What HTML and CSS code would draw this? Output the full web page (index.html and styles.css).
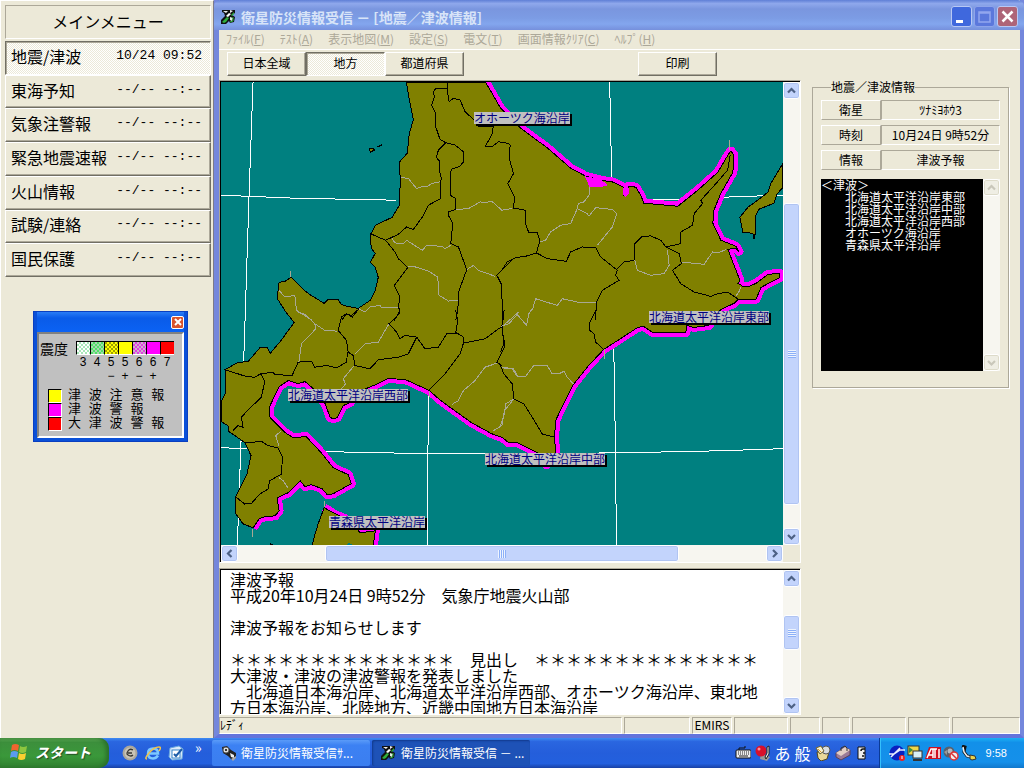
FILE: index.html
```html
<!DOCTYPE html>
<html lang="ja">
<head>
    <meta charset="UTF-8">
    <meta name="viewport" content="width=device-width, initial-scale=1.0">
    <title>衛星防災情報受信</title>
    <link rel="stylesheet" href="styles.css">
</head>
<body>
    <!-- shared icons -->
    <svg class="defs" width="0" height="0">
        <symbol id="arrow-up" viewBox="0 0 9 9"><path d="M1 6.5 4.500 3 8 6.500" fill="none" stroke="currentColor" stroke-width="2.200"/></symbol>
        <symbol id="arrow-down" viewBox="0 0 9 9"><path d="M1 3 4.500 6.500 8 3" fill="none" stroke="currentColor" stroke-width="2.200"/></symbol>
        <symbol id="arrow-left" viewBox="0 0 9 9"><path d="M6.500 1 3 4.500 6.500 8" fill="none" stroke="currentColor" stroke-width="2.200"/></symbol>
        <symbol id="arrow-right" viewBox="0 0 9 9"><path d="M3 1 6.500 4.500 3 8" fill="none" stroke="currentColor" stroke-width="2.200"/></symbol>
        <symbol id="app-icon" viewBox="0 0 16 16">
            <path d="M1 1h13v3l-3 2 3 2-1 5-4 1-1-2-3 3H0v-4l4-4-1-3-2-1z" fill="#111"/>
            <path d="M2 2h5l-2 2zM9 1l3 1-3 2z" fill="#eee"/>
            <path d="M1 13l5-5 2 1-3 4-2 1z" fill="#2fae3c"/>
            <path d="M5 7l3-3 2 1-3 3z" fill="#fff"/>
            <path d="M10 6l3-3v2l-2 2z" fill="#2fae3c"/>
            <path d="M9 8l3 1-1 3-2-1z" fill="#dff0e0"/>
            <path d="M12 8v4l-3 1" fill="none" stroke="#2fae3c"/>
        </symbol>
    </svg>

    <div class="desktop">
        <div class="sidebar">
            <h1 class="menu-title">メインメニュー</h1>
            <nav class="main-menu">
                <button class="menu-item active"><span>地震/津波</span><span class="stamp">10/24 09:52</span></button>
                <button class="menu-item"><span>東海予知</span><span class="stamp">--/-- --:--</span></button>
                <button class="menu-item"><span>気象注警報</span><span class="stamp">--/-- --:--</span></button>
                <button class="menu-item"><span>緊急地震速報</span><span class="stamp">--/-- --:--</span></button>
                <button class="menu-item"><span>火山情報</span><span class="stamp">--/-- --:--</span></button>
                <button class="menu-item"><span>試験/連絡</span><span class="stamp">--/-- --:--</span></button>
                <button class="menu-item"><span>国民保護</span><span class="stamp">--/-- --:--</span></button>
            </nav>

            <div class="legend-window">
                <div class="legend-bar">
                    <button class="legend-close" aria-label="閉じる">
                        <svg width="8" height="8" viewBox="0 0 8 8"><path d="M1 1l6 6M7 1l-6 6" stroke="#fff" stroke-width="2"/></svg>
                    </button>
                </div>
                <div class="legend-body">
                    <div class="scale">
                        <span class="scale-name">震度</span>
                        <ul class="scale-list">
                            <li><i class="swatch s3"></i>3</li>
                            <li><i class="swatch s4"></i>4</li>
                            <li><i class="swatch s5l"></i>5<b>−</b></li>
                            <li><i class="swatch s5u"></i>5<b>+</b></li>
                            <li><i class="swatch s6l"></i>6<b>−</b></li>
                            <li><i class="swatch s6u"></i>6<b>+</b></li>
                            <li><i class="swatch s7"></i>7</li>
                        </ul>
                    </div>
                    <ul class="warnings">
                        <li><i class="swatch s5u"></i>津 波 注 意 報</li>
                        <li><i class="swatch s6u"></i>津 波 警 報</li>
                        <li><i class="swatch s7"></i>大 津 波 警 報</li>
                    </ul>
                </div>
            </div>
        </div>

        <div class="window">
            <div class="titlebar">
                <svg class="icon"><use href="#app-icon"/></svg>
                <h2>衛星防災情報受信 － [地震／津波情報]</h2>
                <button class="win-btn min" aria-label="最小化"><svg width="19" height="19" viewBox="0 0 19 19"><path d="M4 13h7v3H4z" fill="#fff"/></svg></button>
                <button class="win-btn max" aria-label="最大化" disabled><svg width="19" height="19" viewBox="0 0 19 19"><path d="M4 5h11v10H4zM4 6h11" fill="none" stroke="#93a6ee" stroke-width="1.500"/></svg></button>
                <button class="win-btn close" aria-label="閉じる"><svg width="19" height="19" viewBox="0 0 19 19"><path d="M4.500 4.500l10 10M14.500 4.500l-10 10" stroke="#fff" stroke-width="2.500"/></svg></button>
            </div>
            <nav class="menubar">
                <a href="#">ﾌｧｲﾙ(<u>F</u>)</a>
                <a href="#">ﾃｽﾄ(<u>A</u>)</a>
                <a href="#">表示地図(<u>M</u>)</a>
                <a href="#">設定(<u>S</u>)</a>
                <a href="#">電文(<u>T</u>)</a>
                <a href="#">画面情報ｸﾘｱ(<u>C</u>)</a>
                <a href="#">ﾍﾙﾌﾟ(<u>H</u>)</a>
            </nav>
            <div class="toolbar">
                <button class="tool">日本全域</button>
                <button class="tool active">地方</button>
                <button class="tool">都道府県</button>
                <button class="tool print">印刷</button>
            </div>

            <div class="workspace">
                <div class="views">
                    <div class="frame map-frame">
                        <div class="map">
                            <svg class="map-art" viewBox="221 82 561 463" preserveAspectRatio="xMinYMin slice" shape-rendering="crispEdges">
                                <g class="grid">
                                    <path d="M253 82 249 195 245 320 241 440 238 525 237 545"/>
                                    <path d="M221 195 246 196 295 198 396 200"/>
                                    <path d="M645 199 683 199 684 198 723 197 750 196 782 195"/>
                                    <path d="M221 447 243 448 326 451 427 453 568 453 614 452 685 451 755 449 782 448"/>
                                    <path d="M428 389 427 545"/>
                                    <path d="M609 82 611 178M613 348 614 390 615 484 616 545"/>
                                </g>

                                <!-- tsunami warning coast, the land covers its inner half -->
                                <path class="warn" d="M253 527 259 518 265 516 275 515 279 510 277 497 288 492 300 480 305 486 311 484 322 488 327 494 333 493 351 483 348 474 333 467 321 452 306 436 293 437 285 432 270 417 269 407 279 386 288 380 298 383 305 381 313 388 325 403 330 417 333 418 337 417 343 405 350 402 358 392 366 388 378 383 388 378 405 379 429 390 438 398 450 407 471 422 491 433 502 437 508 442 517 442 537 452 546 464 555 452 554 437 555 420 562 405 572 385 588 365 603 349 617 340 637 327 643 326 652 332 685 332 686 325 693 327 708 325 720 309 733 303 737 299 755 299 760 287 779 277 779 273 767 274 755 283 748 286 742 286 737 283 739 280 730 257 727 249 735 248 738 251 735 246 720 240 712 223 713 210 720 193 732 172 733 155 730 151 727 155 717 172 697 190 677 206 643 203 640 195 635 187 628 186 626 195 623 195 623 187 613 182 600 180 585 176 570 168 547 148 520 128 500 108 485 82"/>
                                <path class="warn" d="M324 507 335 514 345 518 358 529 368 530 375 530 373 545"/>

                                <path class="land" d="M406 82 409 100 413 120 409 133 407 153 399 162 400 180 399 205 392 217 375 225 370 235 371 248 375 253 370 262 375 267 378 277 375 290 370 300 358 308 347 306 341 304 338 299 328 299 324 303 311 295 303 289 291 277 285 281 279 282 277 298 286 312 294 322 281 340 270 353 267 347 260 347 248 361 238 362 225 369 226 392 221 401 221 421 228 425 229 431 245 442 251 455 247 473 235 497 235 512 243 523 253 527 259 518 265 516 275 515 279 510 277 497 288 492 300 480 305 486 311 484 322 488 327 494 333 493 351 483 348 474 333 467 321 452 306 436 293 437 285 432 270 417 269 407 279 386 288 380 298 383 305 381 313 388 325 403 330 417 333 418 337 417 343 405 350 402 358 392 366 388 378 383 388 378 405 379 429 390 438 398 450 407 471 422 491 433 502 437 508 442 517 442 537 452 546 464 555 452 554 437 555 420 562 405 572 385 588 365 603 349 617 340 637 327 643 326 652 332 685 332 686 325 693 327 708 325 720 309 733 303 737 299 755 299 760 287 779 277 779 273 767 274 755 283 748 286 742 286 737 283 739 280 730 257 727 249 735 248 738 251 735 246 720 240 712 223 713 210 720 193 732 172 733 155 730 151 727 155 717 172 697 190 677 206 643 203 640 195 635 187 628 186 626 195 623 195 623 187 613 182 600 180 585 176 570 168 547 148 520 128 500 108 485 82z"/>
                                <path class="land" d="M782 163 770 183 767 192 758 199 747 207 739 217 742 232 752 233 753 239 755 230 755 215 758 209 773 203 776 194 782 187z"/>
                                <path class="land" d="M324 507 318 523 315 533 312 545 373 545 375 530 360 532 350 520 335 513z"/>
                                <path class="land" d="M369 148l4 0 1 2-4 2zM270 545v-2l4 2z"/>
                                <path d="M377 146l5-2v2l-5 1z"/>
                                <path class="sea" d="M346 545l2-3 3 1 2 2z"/>
                                <!-- lagoons -->
                                <path class="lagoon" d="M584 176 600 179 607 185 600 187 589 187zM622 188l6 0 0 6-3 3-3-3z"/>

                                <!-- city borders, four map sheets digitised at 3x -->
                                <g class="border" transform="translate(218 80) scale(.33333)">
                                    <path d="M688 5 686 25 652 25 645 35 648 50 640 75 652 100 652 140 665 178 682 188 660 210 654 232 665 245 662 270 668 290 667 355 630 375 612 410 585 448 565 440 540 462 502 480 456 460"/>
                                    <path d="M686 25 692 65 705 55 725 60 740 95 765 118 780 138 824 140 822 160 800 200 820 200 840 185 870 190 875 195 872 235 885 280 868 310 888 350 885 385 900 385"/>
                                    <path d="M682 188 710 195 735 215 735 245 725 258 698 268 695 345 712 355 712 388 690 395 690 405 703 430 697 490 720 500 745 568 722 630 718 690 712 720"/>
                                    <path d="M502 480 530 515 540 535 568 562 528 615 545 650 540 680 545 690 528 720"/>
                                    <path d="M422 685 402 710 385 700 370 720M900 530 885 535 865 555 835 585 848 610 852 680 855 720"/>
                                </g>
                                <g class="border" transform="translate(500 80) scale(.33333)">
                                    <path d="M38 383 75 390 75 430 85 458 110 458 118 480 108 518 75 528 45 532 20 545 0 575"/>
                                    <path d="M108 518 140 535 197 543 210 515 245 500 285 502 300 530 350 570 345 585 355 600 305 630 287 665 285 720"/>
                                    <path d="M345 570 370 545 402 540 402 490 425 468 450 467 480 480 495 500 540 490 540 455 575 435 580 400 605 370 600 360 650 305 680 270 688 225"/>
                                    <path d="M495 500 535 520 542 550 515 570 540 610 580 635 630 648 650 640 680 635 710 655"/>
                                </g>
                                <g class="border" transform="translate(218 310) scale(.33333)">
                                    <path d="M712 0 718 30 712 65 735 80 735 100M545 0 545 8 512 40 535 65 545 85 560 75 595 80 620 115 660 110 685 70 715 68 M735 98 800 85 850 48"/>
                                    <path d="M595 80 570 130 540 140 480 148 455 175 410 165 405 135 390 125 385 90 360 60 370 20 385 10 400 15 415 0"/>
                                    <path d="M388 125 385 155 355 172 325 165 290 170 280 152 240 155 222 195 170 192 165 185 128 190 110 200 85 198 22 178"/>
                                    <path d="M128 190 140 212 130 260 88 300 70 320 75 350 60 345 45 360"/>
                                    <path d="M82 397 130 392 150 405 180 412 193 440 190 490 155 510 150 535 125 550 100 578 80 580 55 560"/>
                                    <path d="M735 98 725 130 680 190 632 238M857 0 850 48 858 110 835 155 850 165"/>
                                </g>
                                <g class="border" transform="translate(500 310) scale(.33333)">
                                    <path d="M5 0 5 60 12 95 0 125M0 165 10 190 35 220 40 265 70 280 95 320 125 370 163 380"/>
                                    <path d="M285 0 265 40 268 60 280 70 285 95 310 118"/>
                                </g>

                                <g class="border minor" transform="translate(218 80) scale(.33333)">
                                    <path d="M548 292 570 295 595 325 610 320 625 320 640 310 665 305M712 388 750 385 785 365 800 367 820 363 850 390 880 385"/>
                                    <path d="M520 472 530 488 555 490 565 480 612 510 625 495 670 498 680 505 697 495"/>
                                    <path d="M568 560 585 558 630 572 658 590 662 645 690 662 718 660M745 568 765 555 780 570 830 588"/>
                                    <path d="M183 630 200 650 230 645 235 690 280 718M422 685 440 695 455 680 485 675 490 682 540 680M218 572v18"/>
                                </g>
                                <g class="border minor" transform="translate(500 80) scale(.33333)">
                                    <path d="M118 485 135 480 150 455 180 435 210 430 230 385 233 370 250 365 265 345 268 320"/>
                                    <path d="M230 385 260 400 265 408 285 382 335 388 348 400 335 440 290 495M402 540 410 570 450 585 490 580 505 555 500 510"/>
                                    <path d="M542 545 610 552 635 515 650 518 675 508M95 690 105 655 170 675 185 655 230 665 287 665M720 620 715 632 705 648M686 180v30"/>
                                </g>
                                <g class="border minor" transform="translate(218 310) scale(.33333)">
                                    <path d="M240 5 260 12 290 40 292 55 275 75 250 100 242 155M290 40 320 60 355 62M512 40 480 95 440 100 410 130M408 165 375 205 382 220 370 235"/>
                                    <path d="M835 158 800 170 770 210 735 240 720 270 700 282M850 170 885 175 900 200M886 265 858 300 850 345 825 360M855 45 900 5"/>
                                    <path d="M188 362 173 375 182 405M182 500 195 510 210 532M320 570v20M104 655v25M632 240v20"/>
                                </g>
                                <g class="border minor" transform="translate(500 310) scale(.33333)">
                                    <path d="M0 48 25 40 50 12 78 45 85 10 95 -5M5 172 35 175 50 198 75 198 100 165 140 165 155 190 175 190 190 182 200 200 218 220"/>
                                    <path d="M40 265 15 280 12 310 0 345M310 115v32"/>
                                </g>
                            </svg>
                            <span class="place okhotsk">オホーツク海沿岸</span>
                            <span class="place east">北海道太平洋沿岸東部</span>
                            <span class="place west">北海道太平洋沿岸西部</span>
                            <span class="place central">北海道太平洋沿岸中部</span>
                            <span class="place aomori">青森県太平洋沿岸</span>
                        </div>
                        <div class="scroll vert map-v">
                            <button aria-label="上へ"><svg><use href="#arrow-up"/></svg></button>
                            <div class="track"><i class="thumb"></i></div>
                            <button aria-label="下へ"><svg><use href="#arrow-down"/></svg></button>
                        </div>
                        <div class="scroll horiz map-h">
                            <button aria-label="左へ"><svg><use href="#arrow-left"/></svg></button>
                            <div class="track"><i class="thumb"></i></div>
                            <button aria-label="右へ"><svg><use href="#arrow-right"/></svg></button>
                        </div>
                        <div class="corner"></div>
                    </div>

                    <div class="frame report-frame">
                        <textarea class="report" aria-label="電文" readonly>津波予報
平成20年10月24日 9時52分　気象庁地震火山部

津波予報をお知らせします

＊＊＊＊＊＊＊＊＊＊＊＊＊＊　見出し　＊＊＊＊＊＊＊＊＊＊＊＊＊＊
大津波・津波の津波警報を発表しました
　北海道日本海沿岸、北海道太平洋沿岸西部、オホーツク海沿岸、東北地
方日本海沿岸、北陸地方、近畿中国地方日本海沿岸</textarea>
                        <div class="scroll vert report-v">
                            <button aria-label="上へ"><svg><use href="#arrow-up"/></svg></button>
                            <div class="track"><i class="thumb"></i></div>
                            <button aria-label="下へ"><svg><use href="#arrow-down"/></svg></button>
                        </div>
                    </div>
                </div>

                <div class="info">
                    <fieldset>
                        <legend>地震／津波情報</legend>
                        <dl class="facts">
                            <dt>衛星</dt><dd>ﾂﾅﾐﾖﾎｳ3</dd>
                            <dt>時刻</dt><dd>10月24日 9時52分</dd>
                            <dt>情報</dt><dd>津波予報</dd>
                        </dl>
                        <div class="areas">
                            <textarea aria-label="対象沿岸" readonly>＜津波＞
　　北海道太平洋沿岸東部
　　北海道太平洋沿岸中部
　　北海道太平洋沿岸西部
　　オホーツク海沿岸
　　青森県太平洋沿岸</textarea>
                            <div class="scroll vert off">
                                <button aria-label="上へ" disabled><svg><use href="#arrow-up"/></svg></button>
                                <div class="track"></div>
                                <button aria-label="下へ" disabled><svg><use href="#arrow-down"/></svg></button>
                            </div>
                        </div>
                    </fieldset>
                </div>
            </div>

            <div class="statusbar">
                <span class="ready">ﾚﾃﾞｨ</span>
                <span></span>
                <span class="system">EMIRS</span>
                <span></span>
                <span></span>
                <span></span>
                <span></span>
                <span></span>
                <span></span>
            </div>
        </div>
    </div>

    <div class="taskbar">
        <button class="start">
            <svg width="20" height="20" viewBox="0 0 20 20">
                <path d="M3 3q3-2 7 0L9 9q-4-2-7 0z" fill="#f0652f"/>
                <path d="M11 4q3 2 7 0l-1 6q-4 2-7 0z" fill="#8dc63f"/>
                <path d="M2 10q3-2 7 0l-1 6q-4-2-7 0z" fill="#5b9bf0"/>
                <path d="M10 11q3 2 7 0l-1 6q-4 2-7 0z" fill="#fbd030"/>
            </svg>
            スタート
        </button>
        <div class="quick">
            <svg class="icon" viewBox="0 0 16 16"><circle cx="8" cy="8" r="7.500" fill="#aaa69c"/><circle cx="8" cy="8" r="5.500" fill="#c9c4b6"/><path d="M11 5q-3-2-5 1t0 4q3 2 5 0M6 8h4" fill="none" stroke="#393733" stroke-width="1.300"/></svg>
            <svg class="icon" viewBox="0 0 16 16"><path d="M3 8.500h10q0-5-5-5t-5 5 5 5q3 0 5-3" fill="none" stroke="#7cc8ff" stroke-width="2.500"/><path d="M2 14Q-1 14 4 8T14 2q3 0 0 4" fill="none" stroke="#f2c34a" stroke-width="1.500"/></svg>
            <svg class="icon" viewBox="0 0 16 16"><path d="M2 3l9-2 4 3-1 10-10 1-3-3z" fill="#dcebfa" stroke="#69a8df"/><rect x="4" y="5" width="8" height="8" fill="#fff" stroke="#3583c8"/><path d="M6 9l2 2 6-7" fill="none" stroke="#1d5da8" stroke-width="2"/></svg>
            <span class="more">»</span>
        </div>
        <button class="task">
            <svg class="icon" viewBox="0 0 16 16"><path d="M1 2l5-1 4 4 5 3v5l-4 2-4-4-5-3z" fill="#222"/><circle cx="5" cy="5" r="3" fill="#ddd" stroke="#555"/><circle cx="5" cy="5" r="1"/><path d="M9 8l4 2v3l-3-1z" fill="#eee"/><path d="M10 14l5-3v2l-3 3z" fill="#aaa"/></svg>
            衛星防災情報受信ｻ...
        </button>
        <button class="task current">
            <svg class="icon"><use href="#app-icon"/></svg>
            衛星防災情報受信 － ...
        </button>
        <div class="langbar">
            <svg class="icon" viewBox="0 0 16 16"><path d="M4 5V3h6V1" fill="none" stroke="#111"/><rect x="1" y="5" width="15" height="8" rx="1" fill="#eee" stroke="#111"/><path d="M3 7h11M3 9h11" stroke="#222" stroke-dasharray="1 1"/><path d="M4 11h9" stroke="#222"/></svg>
            <svg class="icon" viewBox="0 0 16 16"><path d="M6 8l9 4-3 4-7-2z" fill="#999"/><circle cx="6" cy="6" r="5.500" fill="#d8102b"/><circle cx="4" cy="4" r="1.500" fill="#ff8d98"/><path d="M14 1v8l-3 5-1-2 2-4V2z" fill="#e8e8e8" stroke="#222"/></svg>
            <span>あ</span>
            <span>般</span>
            <svg class="icon" viewBox="0 0 16 16"><path d="M2 7h12l-2 7-6 2-3-3z" fill="#e9d99a" stroke="#53481f"/><circle cx="11" cy="5" r="4" fill="#d7dde2" stroke="#555"/><path d="M1 3l5-2 3 5-4 3z" fill="#f7f0cf" stroke="#6e6331"/><path d="M3 4l3 3" stroke="#d92"/></svg>
            <svg class="icon" viewBox="0 0 16 16"><path d="M1 8l9-6 5 3v5l-9 5-5-3z" fill="#9b7b97" stroke="#5b4358"/><path d="M1 8l9-6 5 3-9 6z" fill="#e3cfc5"/><path d="M6 6V3l4-2 2 2v3" fill="none" stroke="#333"/></svg>
            <svg class="icon" viewBox="0 0 16 16"><path d="M3 2h7v12H3z" fill="#eee" stroke="#111"/><path d="M6 6q0-2 2-2h2M8 8h2M7 11h2" fill="none" stroke="#111" stroke-width="1.500"/></svg>
        </div>
        <div class="tray">
            <svg class="icon" viewBox="0 0 16 16"><circle cx="8" cy="8" r="7.500" fill="#0b1fc0"/><path d="M0 9h5l6-4h5M2 12l9-9" stroke="#e8ecff" fill="none" stroke-width="1.500"/><circle cx="13" cy="13" r="3" fill="#e22"/><path d="M13 11v3" stroke="#fff"/></svg>
            <svg class="icon" viewBox="0 0 16 16"><rect x="1" y="1" width="11" height="9" fill="#f1d648" stroke="#333"/><path d="M2 2l4 3-4 3z" fill="#3b8f3e"/><rect x="6" y="6" width="9" height="7" fill="#d9f0f6" stroke="#333"/><path d="M6 15h9" stroke="#333" stroke-width="2"/></svg>
            <svg class="icon ati" viewBox="0 0 16 16"><path d="M4 2h12v12H0z" fill="#cf1020"/><path d="M2 13L6 4h2v9M4 10h4M8 4h4M10 4v9M14 4v9" fill="none" stroke="#fff" stroke-width="1.500"/></svg>
            <svg class="icon" viewBox="0 0 16 16"><circle cx="6" cy="7" r="5.500" fill="#59606b"/><circle cx="7" cy="6" r="2.500" fill="#b2b8c0"/><path d="M1 7l3-2v5z" fill="#999"/><circle cx="11" cy="11" r="4" fill="#eee" stroke="#d33" stroke-width="1.500"/><path d="M8 8l6 6" stroke="#d33" stroke-width="1.500"/></svg>
            <svg class="icon" viewBox="0 0 16 16"><path d="M1 1l3 1-1 5 3 4 5 1" fill="none" stroke="#111" stroke-width="3"/><path d="M2 2l1 5 3 4 4 1" fill="none" stroke="#eee" stroke-width="1.500"/><path d="M9 10l5 1 1 3-4 1-2-1z" fill="#e9d34b" stroke="#333"/></svg>
            <span class="clock">9:58</span>
        </div>
    </div>
</body>
</html>
```

FILE: styles.css
```css
* {
    box-sizing: border-box;
}

body {
    margin: 0;
    height: 100vh;
    display: flex;
    flex-direction: column;
    overflow: hidden;
    background: #ece9d8;
    color: #000;
    font: 12px/14px "Noto Sans CJK JP", sans-serif;
}

button, textarea {
    font: inherit;
    color: inherit;
    border-radius: 0;
    padding: 0;
    margin: 0;
}

h1, h2, ul, dl, dd {
    margin: 0;
    padding: 0;
    font-weight: normal;
    list-style: none;
}

svg {
    display: block;
    flex: none;
}

.defs {
    position: absolute;
}

.icon {
    width: 16px;
    height: 16px;
}

.desktop {
    flex: 1;
    min-height: 0;
    display: flex;
}

/* left side menu */
.sidebar {
    flex: none;
    width: 214px;
    padding: 4px 2px 0 4px;
    border-left: 1px solid #fff;
    border-right: 1px solid #7c7a88;
    border-top: 1px solid #fff;
}

.menu-title {
    height: 34px;
    margin-bottom: 2px;
    font-size: 16px;
    line-height: 30px;
    text-align: center;
    border: 1px solid;
    border-color: #aca899 #fff #fff #aca899;
}

.main-menu {
    display: flex;
    flex-direction: column;
    height: 236px;
}

.menu-item {
    flex: 1;
    display: flex;
    justify-content: space-between;
    align-items: center;
    padding: 0 8px 4px 5px;
    font-size: 16px;
    line-height: 20px;
    background: #ece9d8;
    border: 1px solid;
    border-color: #fff #716f64 #716f64 #fff;
    box-shadow: inset -1px -1px #aca899;
}

.menu-item.active, .tool.active {
    background: repeating-conic-gradient(#fff 0 25%, #ece9d8 0 50%) 0 0 / 2px 2px;
    border-color: #716f64 #fff #fff #716f64;
    box-shadow: inset 1px 1px #aca899;
}

.stamp {
    font-family: "Liberation Mono", monospace;
    font-size: 13px;
}

/* colour legend */
.legend-window {
    width: 155px;
    margin: 34px 0 0 28px;
    padding: 0 3px 3px;
    background: #0a50d8;
    border: 1px solid #0a3fc0;
}

.legend-bar {
    display: flex;
    justify-content: flex-end;
    align-items: center;
    height: 20px;
    background: linear-gradient(#2a7cf5, #0a5be8 30%, #0b62f4);
}

.legend-close {
    width: 13px;
    height: 13px;
    display: flex;
    align-items: center;
    justify-content: center;
    background: #d9532c;
    border: 1px solid #fff;
    border-radius: 2px;
}

.legend-body {
    height: 106px;
    padding: 7px 0 0 1px;
    background: #c0c0c0;
    border: 2px solid;
    border-color: #808080 #fff #fff #808080;
}

.scale {
    display: flex;
    height: 48px;
}

.scale-name {
    width: 36px;
    font-size: 14px;
    line-height: 14px;
}

.scale-list {
    display: flex;
    font-family: "Liberation Sans", sans-serif;
}

.scale-list li {
    width: 14px;
    text-align: center;
    line-height: 14px;
}

.scale-list b {
    display: block;
    font-weight: normal;
    line-height: 14px;
}

.swatch {
    display: block;
    width: 14px;
    height: 14px;
    border: 1px solid;
    border-color: #000 #fff #fff #000;
}

.scale-list .swatch {
    border-right: 0;
}

.s3 { background: repeating-conic-gradient(#a8e8b8 0 25%, #fff 0 50%) 0 0 / 4px 4px; }
.s4 { background: repeating-conic-gradient(#50e068 0 25%, #a8d8b0 0 50%) 0 0 / 4px 4px; }
.s5l { background: repeating-conic-gradient(#ff0 0 25%, #a0a000 0 50%) 0 0 / 4px 4px; }
.s5u { background: #ff0; }
.s6l { background: repeating-conic-gradient(#e040e0 0 25%, #d0b0d0 0 50%) 0 0 / 4px 4px; }
.s6u { background: #f0f; }
.s7 { background: #f00; }

.warnings {
    padding-left: 8px;
    font: 13px/14px "Liberation Mono", "Noto Sans CJK JP", monospace;
}

.warnings li {
    display: flex;
    gap: 6px;
    height: 14px;
}

/* main window */
.window {
    flex: 1;
    min-width: 0;
    display: flex;
    flex-direction: column;
    background: #ece9d8;
    border: solid #7487dc;
    border-width: 0 4px 4px 5px;
    border-bottom-color: #6474dc;
}

.titlebar {
    display: flex;
    align-items: center;
    gap: 2px;
    height: 30px;
    margin: 0 -4px 0 -5px;
    padding: 3px 6px 0 7px;
    background: linear-gradient(#5f7fd6, #8fa8ec 12%, #7a96df 30%, #7c9ce4 60%, #83a6ee 80%, #7690dc);
    border-radius: 6px 6px 0 0;
}

.titlebar h2 {
    flex: 1;
    padding-left: 2px;
    font-size: 14px;
    line-height: 20px;
    font-weight: bold;
    color: #d8e4f8;
    white-space: nowrap;
}

.win-btn {
    width: 21px;
    height: 21px;
    border: 1px solid #b8c8f4;
    border-radius: 3px;
    background: #3f68dd;
}

.win-btn.max {
    background: #5b78dc;
    border-color: #8ea4ea;
}

.win-btn.close {
    background: #ae6478;
}

.menubar {
    display: flex;
    height: 20px;
    border-bottom: 1px solid #fff;
    line-height: 18px;
}

.menubar a {
    padding: 0 8px 0 7px;
    color: #aca899;
    text-decoration: none;
}

.toolbar {
    display: flex;
    height: 30px;
    padding: 2px 0 0 8px;
}

.tool {
    width: 79px;
    height: 24px;
    padding-bottom: 2px;
    background: #ece9d8;
    border: 1px solid;
    border-color: #fff #716f64 #716f64 #fff;
    box-shadow: inset -1px -1px #aca899;
}

.tool.print {
    margin-left: 174px;
}

.workspace {
    flex: 1;
    min-height: 0;
    display: flex;
}

.views {
    flex: 1;
    min-width: 0;
    display: flex;
    flex-direction: column;
    gap: 5px;
}

.frame {
    display: grid;
    grid-template-columns: 1fr 17px;
    padding: 1px 0 0 1px;
    background: #000;
    border: 1px solid;
    border-color: #aca899 #fff #fff #aca899;
}

.map-frame {
    flex: 1;
    min-height: 0;
    grid-template-rows: 1fr 17px;
}

.map {
    position: relative;
    overflow: hidden;
    min-height: 0;
    background: #008080;
}

.map-art {
    width: 100%;
    height: 100%;
}

.grid path {
    fill: none;
    stroke: #fff;
}

.warn {
    fill: none;
    stroke: #f0f;
    stroke-width: 9;
    stroke-linejoin: round;
}

.land {
    fill: #808000;
    stroke: #000;
}

.sea {
    fill: #008080;
}

.lagoon {
    fill: #f0f;
}

.border {
    fill: none;
    stroke: #000;
    stroke-width: 3;
}

.border.minor {
    stroke: #a8a894;
}

.place {
    position: absolute;
    height: 12px;
    line-height: 12px;
    color: #000080;
    background: #c0c0c0;
    box-shadow: 2px 2px #000;
    white-space: nowrap;
}

.okhotsk { left: 253px; top: 30px; }
.east { left: 428px; top: 229px; }
.west { left: 67px; top: 307px; }
.central { left: 264px; top: 371px; }
.aomori { left: 108px; top: 434px; }

/* scroll bars */
.scroll {
    display: flex;
    background: #f7f6f0;
}

.scroll.vert {
    flex-direction: column;
}

.scroll button, .thumb {
    background: #c3d4fc;
    border: 1px solid #fff;
    border-radius: 3px;
    box-shadow: inset 0 0 0 1px #b0c4f2;
    color: #4d6185;
}

.scroll button {
    flex: none;
    width: 17px;
    height: 17px;
    display: flex;
    align-items: center;
    justify-content: center;
}

.scroll button svg {
    width: 9px;
    height: 9px;
}

.track {
    flex: 1;
    display: grid;
}

.thumb {
    display: flex;
    align-items: center;
    justify-content: center;
}

.thumb::after {
    content: "";
    width: 8px;
    height: 8px;
    background: repeating-linear-gradient(#eef4fe 0 1px, #8cb0f8 1px 2px);
}

.horiz .thumb::after {
    background: repeating-linear-gradient(90deg, #eef4fe 0 1px, #8cb0f8 1px 2px);
}

.map-v .track { grid-template-rows: 104fr 302fr 23fr; }
.map-h .track { grid-template-columns: 87fr 353fr 87fr; }
.report-v .track { grid-template-rows: 28fr 35fr 47fr; }

.vert .thumb { grid-row: 2; }
.horiz .thumb { grid-column: 2; }

.scroll.off button {
    background: #efeee4;
    border-color: #fff;
    box-shadow: inset 0 0 0 1px #dddbca;
    color: #c9c7ba;
}

.corner {
    background: #ece9d8;
}

.report-frame {
    height: 147px;
}

.report {
    display: block;
    width: 100%;
    height: 100%;
    padding: 1px 0 0 9px;
    border: 0;
    outline: 0;
    resize: none;
    overflow: hidden;
    background: #fff;
    font-size: 16px;
    line-height: 16px;
    white-space: pre;
}

/* right side information */
.info {
    flex: none;
    width: 219px;
    padding: 0 11px;
}

fieldset {
    margin: 0;
    min-width: 0;
    padding: 6px 8px 16px;
    border: 1px solid #aca899;
    box-shadow: 1px 1px #fff;
}

legend {
    margin-left: 10px;
    padding: 0;
}

.facts {
    display: grid;
    grid-template-columns: 60px 1fr;
    gap: 5px 0;
    text-align: center;
    line-height: 18px;
}

.facts dt {
    border: 1px solid;
    border-color: #fff #aca899 #aca899 #fff;
}

.facts dd {
    border: 1px solid;
    border-color: #aca899 #fff #fff #aca899;
}

.areas {
    display: flex;
    height: 192px;
    margin-top: 9px;
}

.areas textarea {
    flex: 1;
    min-width: 0;
    border: 0;
    outline: 0;
    resize: none;
    overflow: hidden;
    background: #000;
    color: #fff;
    line-height: 12px;
    white-space: pre;
}

.statusbar {
    display: grid;
    grid-template-columns: 1fr 66px 40px 54px 30px 28px 54px 42px 68px;
    gap: 2px;
    height: 19px;
    padding-top: 2px;
    line-height: 14px;
}

.statusbar span {
    border: 1px solid;
    border-color: #aca899 #fff #fff #aca899;
}

.statusbar .system {
    text-align: center;
}

/* taskbar */
.taskbar {
    flex: none;
    display: flex;
    height: 30px;
    background: linear-gradient(#3f8cf3, #2a66e0 12%, #245edb 50%, #2360de 85%, #1941a5);
    color: #fff;
}

.start {
    display: flex;
    align-items: center;
    gap: 6px;
    width: 109px;
    padding: 0 0 2px 9px;
    border: 0;
    border-radius: 0 10px 10px 0;
    background: linear-gradient(#5eac56, #3c8f3c 15%, #3a983a 60%, #2f7f2f);
    box-shadow: inset -3px 0 4px #2a6e2a;
    font-size: 14px;
    line-height: 18px;
    font-weight: bold;
    font-style: italic;
    text-shadow: 1px 1px 1px #234d23;
}

.quick {
    display: flex;
    align-items: center;
    gap: 7px;
    width: 103px;
    padding-left: 13px;
}

.more {
    align-self: flex-start;
    padding: 2px 0 0 4px;
    font-size: 14px;
}

.task {
    display: flex;
    align-items: center;
    gap: 4px;
    flex: 0 1 158px;
    height: 26px;
    margin: 2px 2px 0 0;
    padding-left: 9px;
    border: 0;
    border-radius: 2px;
    background: linear-gradient(#5a9bf8, #3c81f3 20%, #3b7ef0);
    white-space: nowrap;
    overflow: hidden;
}

.task.current {
    background: #1e52b7;
    box-shadow: inset 1px 1px 2px #123a8c;
}

.langbar {
    display: flex;
    align-items: center;
    gap: 4px;
    margin-left: auto;
    padding-right: 8px;
    font-size: 16px;
    line-height: 20px;
}

.tray {
    display: flex;
    align-items: center;
    gap: 2px;
    padding: 0 17px 0 9px;
    border-left: 1px solid #0a3a96;
    box-shadow: inset 1px 0 #35c0fb;
    background: linear-gradient(#1cb0f4, #1290e9 15%, #1590ea 80%, #1178cc);
}

.clock {
    padding-left: 7px;
    font: 11px/14px "Liberation Sans", sans-serif;
}
```
